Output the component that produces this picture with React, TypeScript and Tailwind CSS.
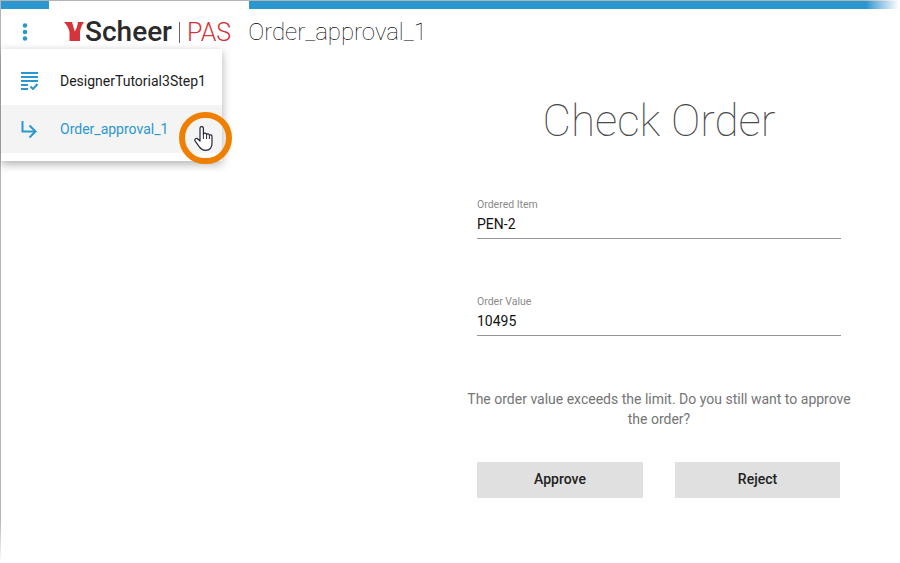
import React from "react";

function Kebab() {
  return (
    <svg width="6" height="18" viewBox="0 0 6 18" className="block">
      <circle cx="3" cy="2.5" r="2.3" fill="#2b97cf" />
      <circle cx="3" cy="9" r="2.3" fill="#2b97cf" />
      <circle cx="3" cy="15.5" r="2.3" fill="#2b97cf" />
    </svg>
  );
}

function ScheerMark() {
  return (
    <svg width="20" height="19" viewBox="0 0 20 19" className="block">
      <path d="M0 0H8L10.8 9.5C12.5 6.5 13.6 3.5 14 0H20C17.5 3 16.5 7 16 10V19H5.5V10C5 7 3 3 0 0Z" fill="#d5343a" />
    </svg>
  );
}

function TaskIcon() {
  return (
    <svg width="17" height="18" viewBox="0 0 17 18" className="block" fill="#2b97cf">
      <rect x="0" y="0" width="17" height="2" />
      <rect x="0" y="4" width="17" height="2" />
      <rect x="0" y="8" width="17" height="2" />
      <rect x="0" y="12" width="7" height="2" />
      <rect x="0" y="16" width="7" height="2" />
      <path d="M9.5 14.5L12 17L16.5 12" fill="none" stroke="#2b97cf" strokeWidth="2" />
    </svg>
  );
}

function ArrowIcon() {
  return (
    <svg width="16" height="17" viewBox="0 0 16 17" className="block" fill="none" stroke="#2b97cf" strokeWidth="2">
      <path d="M1.5 0V10.5H14" />
      <path d="M8.5 4.5L14.5 10.5L8.5 16.5" />
    </svg>
  );
}

function HandCursor() {
  return (
    <svg width="19" height="25" viewBox="0 0 19 25" className="block">
      <path
        d="M6 2.2C6 0 9.4 0 9.4 2.2V8C10 6.8 12.2 6.8 12.6 8.4C13.2 7.4 15.2 7.6 15.4 9.2C16.2 8.4 18 8.8 18 10.6V17C18 21.5 15.8 24.3 11.5 24.3C8.5 24.3 7 23.2 5.5 21.2L1.2 15.2C0 13.4 2 11.6 3.8 13L6 15Z"
        fill="#ffffff"
        stroke="#23283a"
        strokeWidth="1.2"
        strokeLinejoin="round"
      />
      <path d="M9.4 8V13M12.6 8.4V13M15.4 9.2V13" stroke="#23283a" strokeWidth="1" fill="none" />
    </svg>
  );
}

function Field({ label, value }: { label: string; value: string }) {
  return (
    <div className="flex h-[43px] flex-col border-b border-[#949494] pt-[3px]">
      <span className="text-[10.5px] leading-[12px] text-[#8a8a8a]">{label}</span>
      <span className="mt-[3px] text-sm leading-[20px] text-[#111111]">{value}</span>
    </div>
  );
}

export default function App() {
  return (
    <div className="relative flex h-[563px] w-[900px] flex-col overflow-hidden bg-white font-[Roboto,sans-serif]">
      <div className="h-px bg-gradient-to-r from-[#b4b4b4] from-[96%] to-white" />
      <div className="flex flex-1">
        <div className="w-px bg-gradient-to-b from-[#b4b4b4] from-[92%] to-white" />
        <div className="flex flex-1 flex-col">
          <div className="flex h-2 pr-[1px]">
            <div className="w-12 bg-[#2b97cf]" />
            <div className="w-[200px]" />
            <div className="flex-1 bg-gradient-to-r from-[#2b97cf] from-[95%] to-white" />
          </div>

          <header className="flex h-[44px] items-center">
            <div className="ml-[21px] w-[42px] pt-[1px]">
              <Kebab />
            </div>
            <ScheerMark />
            <span className="ml-px pt-[2px] text-[28px] font-medium leading-none text-[#2a2a2a]">Scheer</span>
            <span className="ml-[7px] mr-[7px] mt-[2px] h-[21px] w-px bg-[#666666]" />
            <span className="pt-[2px] text-[25px] font-light leading-none text-[#d5343a]">PAS</span>
            <span className="ml-[17px] pt-[2px] text-2xl font-thin leading-none text-black">Order_approval_1</span>
          </header>

          <main className="ml-[466px] flex w-[384px] flex-col px-[10px] pt-[40px]">
            <h1 className="text-center text-[44px] font-thin leading-[56px] text-[#4a4a4a]">Check Order</h1>
            <div className="mt-[47px] flex flex-col gap-[54px]">
              <Field label="Ordered Item" value="PEN-2" />
              <Field label="Order Value" value="10495" />
            </div>
            <p className="-mx-[10px] mt-[53px] text-center text-sm leading-[20px] text-[#757575]">
              The order value exceeds the limit. Do you still want to approve the order?
            </p>
            <div className="mt-[33px] flex justify-between pr-px">
              <button className="h-9 w-[166px] bg-[#e0e0e0] pb-[2px] text-sm font-medium text-[#222222]">Approve</button>
              <button className="h-9 w-[165px] bg-[#e0e0e0] pb-[2px] text-sm font-medium text-[#222222]">Reject</button>
            </div>
          </main>
        </div>
      </div>

      <div className="absolute left-px top-[49px] w-[221px] bg-white py-2 shadow-[0_3px_9px_rgba(0,0,0,0.32)]">
        <div className="flex h-12 items-center pl-5">
          <TaskIcon />
          <span className="ml-[22px] text-sm text-[#1c1c1c]">DesignerTutorial3Step1</span>
        </div>
        <div className="flex h-12 items-center bg-[#f4f4f4] pl-5">
          <ArrowIcon />
          <span className="ml-[23px] text-sm text-[#2b97cf]">Order_approval_1</span>
        </div>
      </div>

      <div className="absolute left-[179px] top-[112px] flex h-[52px] w-[53px] items-center justify-center rounded-full border-[6px] border-[#f07f00] pr-[4px]">
        <HandCursor />
      </div>
    </div>
  );
}
